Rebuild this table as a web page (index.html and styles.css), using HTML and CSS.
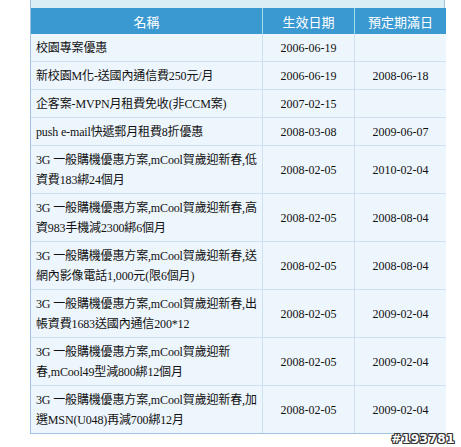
FILE: index.html
```html
<!DOCTYPE html>
<html>
<head>
<meta charset="utf-8">
<link rel="stylesheet" href="styles.css">
</head>
<body>
<div class="page">
  <div class="frame">
    <table class="plans">
      <thead>
        <tr><th class="c-name">名稱</th><th class="c-date">生效日期</th><th class="c-date2">預定期滿日</th></tr>
      </thead>
      <tbody>
        <tr><td>校園專案優惠</td><td class="d">2006-06-19</td><td class="d"></td></tr>
        <tr><td>新校園M化-送國內通信費250元/月</td><td class="d">2006-06-19</td><td class="d">2008-06-18</td></tr>
        <tr><td>企客案-MVPN月租費免收(非CCM案)</td><td class="d">2007-02-15</td><td class="d"></td></tr>
        <tr><td>push e-mail快遞郵月租費8折優惠</td><td class="d">2008-03-08</td><td class="d">2009-06-07</td></tr>
        <tr><td>3G 一般購機優惠方案,mCool賀歲迎新春,低資費183綁24個月</td><td class="d">2008-02-05</td><td class="d">2010-02-04</td></tr>
        <tr><td>3G 一般購機優惠方案,mCool賀歲迎新春,高資983手機減2300綁6個月</td><td class="d">2008-02-05</td><td class="d">2008-08-04</td></tr>
        <tr><td>3G 一般購機優惠方案,mCool賀歲迎新春,送網內影像電話1,000元(限6個月)</td><td class="d">2008-02-05</td><td class="d">2008-08-04</td></tr>
        <tr><td>3G 一般購機優惠方案,mCool賀歲迎新春,出帳資費1683送國內通信200*12</td><td class="d">2008-02-05</td><td class="d">2009-02-04</td></tr>
        <tr><td>3G 一般購機優惠方案,mCool賀歲迎新春,mCool49型減800綁12個月</td><td class="d">2008-02-05</td><td class="d">2009-02-04</td></tr>
        <tr><td>3G 一般購機優惠方案,mCool賀歲迎新春,加選MSN(U048)再減700綁12月</td><td class="d">2008-02-05</td><td class="d">2009-02-04</td></tr>
      </tbody>
    </table>
  </div>
  <div class="mark">#193781</div>
</div>
</body>
</html>
```
FILE: styles.css
```css
html, body {
  margin: 0;
  padding: 0;
  background: #ffffff;
}
.page {
  position: relative;
  width: 461px;
  height: 447px;
  overflow: hidden;
}
.frame {
  margin-left: 30px;
  width: 413px;
  padding-top: 8px;
  background: #daeef6;
  border-left: 1px solid #9fc3e0;
  border-right: 1px solid #9fc3e0;
  border-bottom: 1px solid #9fc3e0;
}
.plans {
  width: 413px;
  border-collapse: collapse;
  table-layout: fixed;
  font-family: "Liberation Serif", "Noto Sans CJK TC", serif;
  font-size: 12px;
  color: #111111;
}
.plans th {
  height: 26px;
  padding: 0;
  background: #3b99d2;
  color: #ffffff;
  font-family: "Noto Sans CJK TC", sans-serif;
  font-weight: normal;
  font-size: 13px;
  text-align: center;
  border-left: 1px solid #a6dcee;
}
.plans th:first-child { border-left: none; }
.c-name { width: 231px; }
.c-date { width: 91px; }
.c-date2 { width: 91px; }
.plans td {
  background: #eef6fd;
  border-top: 1px solid #cfe1f0;
  border-left: 1px solid #cfe1f0;
  padding: 4px 1px 3px 5px;
  line-height: 20px;
  vertical-align: middle;
  letter-spacing: -0.15px;
}
.plans td:first-child { border-left: none; }
.plans tbody tr:first-child td { border-top: none; }
.plans td.d {
  text-align: center;
  padding-left: 0;
  padding-right: 0;
  letter-spacing: 0;
}
.mark {
  position: absolute;
  right: 6px;
  bottom: 1px;
  font-family: "DejaVu Sans", sans-serif;
  font-weight: bold;
  font-size: 12px;
  color: #ffffff;
  text-shadow: -1px -1px 0 #333, 1px -1px 0 #333, -1px 1px 0 #333, 1px 1px 0 #333, 0 1px 0 #333, 1px 0 0 #333, -1px 0 0 #333, 0 -1px 0 #333;
  letter-spacing: 0.5px;
}
```
